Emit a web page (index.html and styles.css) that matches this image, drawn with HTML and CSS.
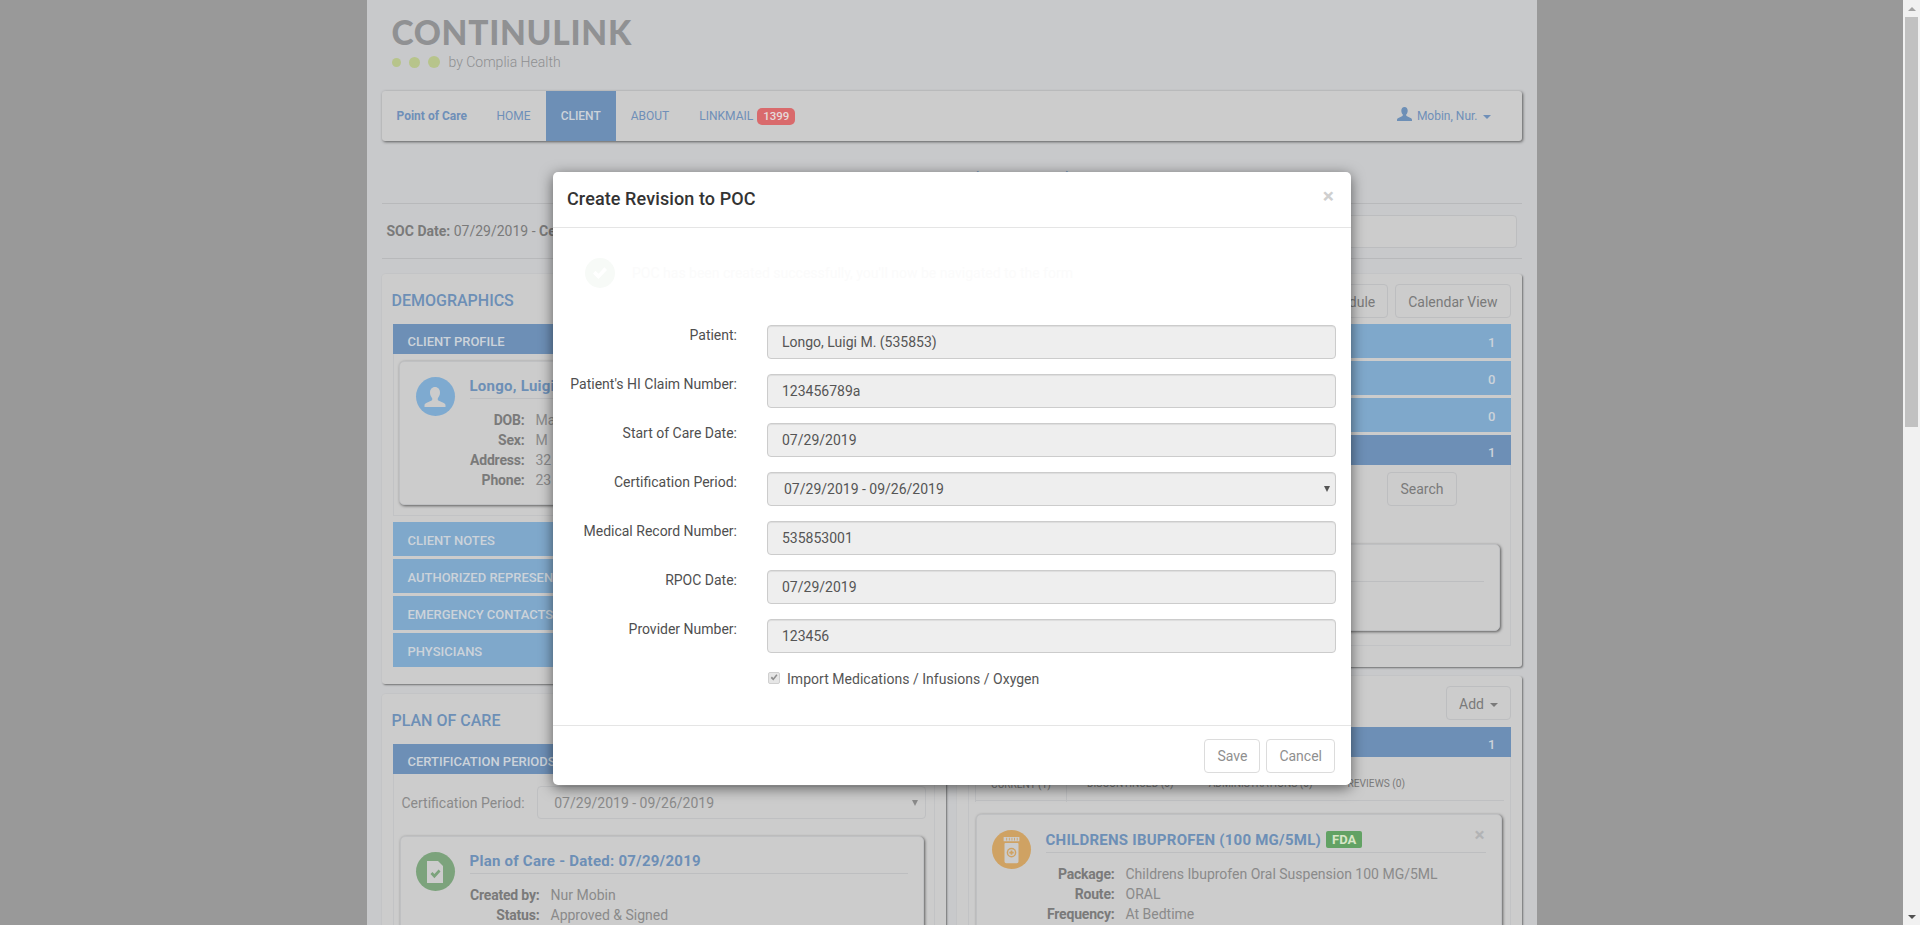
FILE: index.html
```html
<!DOCTYPE html>
<html lang="en">
<head>
    <meta charset="UTF-8">
    <meta name="viewport" content="width=device-width, initial-scale=1.0">
    <title>Create Revision to POC</title>
    <link rel="stylesheet" href="styles.css">
</head>
<body>
    <div class="viewport">
        <div class="container">
            <header class="logo">
                <div class="logo-name">CONTINULINK</div>
                <div class="logo-sub">
                    <span class="dot dot-sm"></span>
                    <span class="dot dot-md"></span>
                    <span class="dot dot-lg"></span>
                    <span class="logo-by">by Complia Health</span>
                </div>
            </header>

            <nav class="navbar">
                <a class="nav-brand">Point of Care</a>
                <a class="nav-link">HOME</a>
                <a class="nav-link active">CLIENT</a>
                <a class="nav-link">ABOUT</a>
                <a class="nav-link nav-mail">LINKMAIL <span class="badge">1399</span></a>
                <a class="nav-link nav-user">
                    <svg class="user-icon" viewBox="0 0 16 16"><path d="M8 0c2.100 0 3.400 1.600 3.400 3.900 0 1.600-.6 3-1.400 3.900-.3.4-.3 1.400.2 1.700l4.300 2.300c.9.5 1.500 1 1.500 2.200v1H0v-1c0-1.200.6-1.700 1.500-2.200l4.300-2.300c.5-.3.5-1.300.2-1.700-.8-.9-1.400-2.300-1.400-3.900C4.600 1.600 5.900 0 8 0z"/></svg>
                    Mobin, Nur. <span class="caret"></span>
                </a>
            </nav>

            <h2 class="client-title">Longo, Luigi M. (535853-0)</h2>

            <div class="soc-row">
                <div class="soc-text"><b>SOC Date:</b> 07/29/2019 - <b>Cert</b></div>
                <div class="soc-box"></div>
            </div>

            <div class="columns">
                <div class="column">
                    <section class="panel panel-demo">
                        <h3 class="panel-title">DEMOGRAPHICS</h3>
                        <div class="acc-head dark">CLIENT PROFILE</div>
                        <div class="acc-body">
                            <div class="card card-profile">
                                <div class="circle circle-blue">
                                    <svg viewBox="0 0 24 24" width="24" height="24"><path fill="#ccc" d="M12 2c3 0 5 2.300 5 5.600 0 2.300-.9 4.200-2 5.400-.4.600-.4 2 .3 2.400l5.500 2.600c1 .5 1.700 1.100 1.700 2.500V22H1.500v-1.500c0-1.400.7-2 1.700-2.500l5.500-2.600c.7-.4.7-1.800.3-2.400-1.100-1.200-2-3.100-2-5.400C7 4.300 9 2 12 2z"/></svg>
                                </div>
                                <div class="card-main">
                                    <div class="card-title">Longo, Luigi M.</div>
                                    <dl class="facts facts-profile">
                                        <dt>DOB:</dt><dd>Mar</dd>
                                        <dt>Sex:</dt><dd>M</dd>
                                        <dt>Address:</dt><dd>32</dd>
                                        <dt>Phone:</dt><dd>23</dd>
                                    </dl>
                                </div>
                            </div>
                        </div>
                        <div class="acc-head light">CLIENT NOTES</div>
                        <div class="acc-head light">AUTHORIZED REPRESENTATIVES</div>
                        <div class="acc-head light">EMERGENCY CONTACTS</div>
                        <div class="acc-head light">PHYSICIANS</div>
                    </section>

                    <section class="panel panel-poc">
                        <h3 class="panel-title">PLAN OF CARE</h3>
                        <div class="acc-head dark">CERTIFICATION PERIODS</div>
                        <div class="acc-body acc-body-open">
                            <div class="cert-row">
                                <span class="cert-label">Certification Period:</span>
                                <div class="cert-select">07/29/2019 - 09/26/2019<span class="arrow"></span></div>
                            </div>
                            <div class="card card-poc">
                                <div class="circle circle-green">
                                    <svg viewBox="0 0 24 24" width="24" height="28"><path fill="#ccc" d="M4 1h11l5 5v17H4z"/><path fill="#7ca37c" d="M7.500 14l1.900-2 2 2.100 4.200-4.600 1.900 2-6.100 6.700z"/></svg>
                                </div>
                                <div class="card-main">
                                    <div class="card-title">Plan of Care - Dated: 07/29/2019</div>
                                    <dl class="facts facts-poc">
                                        <dt>Created by:</dt><dd>Nur Mobin</dd>
                                        <dt>Status:</dt><dd>Approved &amp; Signed</dd>
                                    </dl>
                                </div>
                            </div>
                        </div>
                    </section>
                </div>

                <div class="column">
                    <section class="panel panel-visits">
                        <div class="panel-tools">
                            <button class="btn">Schedule</button>
                            <button class="btn">Calendar View</button>
                        </div>
                        <div class="acc-head light count-row"><span>1</span></div>
                        <div class="acc-head light count-row"><span>0</span></div>
                        <div class="acc-head light count-row"><span>0</span></div>
                        <div class="acc-head dark count-row"><span>1</span></div>
                        <div class="acc-body acc-body-visits">
                            <div class="search-row"><button class="btn">Search</button></div>
                            <div class="card card-visit"><div class="visit-line"></div></div>
                        </div>
                    </section>

                    <section class="panel panel-meds">
                        <div class="panel-tools tools-add">
                            <button class="btn">Add <span class="caret"></span></button>
                        </div>
                        <div class="acc-head dark count-row"><span>1</span></div>
                        <div class="acc-body acc-body-meds">
                            <div class="tabs">
                                <a class="tab active">CURRENT (1)</a>
                                <a class="tab">DISCONTINUED (0)</a>
                                <a class="tab">ADMINISTRATIONS (0)</a>
                                <a class="tab">REVIEWS (0)</a>
                            </div>
                            <div class="card card-med">
                                <div class="circle circle-orange">
                                    <svg viewBox="0 0 24 32" width="21" height="28"><path fill="#ccc" d="M3 1h18v5H3zM5 8h14a1 1 0 0 1 1 1v20a2 2 0 0 1-2 2H6a2 2 0 0 1-2-2V9a1 1 0 0 1 1-1z"/><path fill="#cfa263" d="M6 2h1v3H6zM9 2h1v3H9zM12 2h1v3h-1zM15 2h1v3h-1zM18 2h1v3h-1z"/><circle cx="12" cy="19" r="5.500" fill="#cfa263"/><circle cx="12" cy="19" r="3.800" fill="#ccc"/><path fill="#cfa263" d="M11 16.500h2V18h1.500v2H13v1.500h-2V20H9.500v-2H11z"/></svg>
                                </div>
                                <div class="card-main">
                                    <div class="card-title">CHILDRENS IBUPROFEN (100 MG/5ML) <span class="fda">FDA</span></div>
                                    <span class="card-close">&times;</span>
                                    <dl class="facts facts-med">
                                        <dt>Package:</dt><dd>Childrens Ibuprofen Oral Suspension 100 MG/5ML</dd>
                                        <dt>Route:</dt><dd>ORAL</dd>
                                        <dt>Frequency:</dt><dd>At Bedtime</dd>
                                    </dl>
                                </div>
                            </div>
                        </div>
                    </section>
                </div>
            </div>
        </div>

        <div class="modal">
            <div class="modal-header">
                <h4 class="modal-title">Create Revision to POC</h4>
                <span class="modal-close">&times;</span>
            </div>
            <div class="modal-body">
                <div class="alert-faded">
                    <span class="alert-icon">
                        <svg viewBox="0 0 16 16" width="16" height="16"><path fill="#fff" d="M1 8.500l2.500-2.700 3 3 6-6.500L15 5l-8.500 9z"/></svg>
                    </span>
                    POC has been created successfully, you'll now be navigated to the form
                </div>
                <form class="form">
                    <label class="form-label">Patient:</label>
                    <input class="form-input" type="text" value="Longo, Luigi M. (535853)" disabled>
                    <label class="form-label">Patient's HI Claim Number:</label>
                    <input class="form-input" type="text" value="123456789a" disabled>
                    <label class="form-label">Start of Care Date:</label>
                    <input class="form-input" type="text" value="07/29/2019" disabled>
                    <label class="form-label">Certification Period:</label>
                    <div class="select-wrap">
                        <select class="form-input form-select" disabled><option>07/29/2019 - 09/26/2019</option></select>
                    </div>
                    <label class="form-label">Medical Record Number:</label>
                    <input class="form-input" type="text" value="535853001" disabled>
                    <label class="form-label">RPOC Date:</label>
                    <input class="form-input" type="text" value="07/29/2019" disabled>
                    <label class="form-label">Provider Number:</label>
                    <input class="form-input" type="text" value="123456" disabled>
                    <div class="form-check">
                        <span class="check-box">
                            <svg viewBox="0 0 12 12" width="11" height="11"><path fill="#8f8f8f" d="M2 6.500l1.500-1.600 1.700 1.700L8.800 2l1.400 1.300-5 6.200z"/></svg>
                        </span>
                        Import Medications / Infusions / Oxygen
                    </div>
                </form>
            </div>
            <div class="modal-footer">
                <button class="btn btn-modal">Save</button>
                <button class="btn btn-modal">Cancel</button>
            </div>
        </div>
    </div>

    <div class="scrollbar">
        <div class="scroll-btn"><span class="scroll-up"></span></div>
        <div class="scroll-track"><div class="scroll-thumb"></div></div>
        <div class="scroll-btn"><span class="scroll-down"></span></div>
    </div>
</body>
</html>
```

FILE: styles.css
```css
html, body {
    height: 100%;
}

body {
    margin: 0;
    height: 925px;
    overflow: hidden;
    display: flex;
    background-color: #999;
    font-family: 'Roboto', sans-serif;
    font-size: 14px;
    color: #7a7a7a;
}

.viewport {
    flex: 1;
    position: relative;
    overflow: hidden;
}

.container {
    box-sizing: border-box;
    width: 1170px;
    height: 925px;
    margin: 0 auto;
    padding: 0 15px;
    background-color: #c8c9cb;
}

/* logo */
.logo {
    box-sizing: border-box;
    height: 91px;
    padding: 14px 0 0 10px;
}

.logo-name {
    font-family: 'Lato', sans-serif;
    font-weight: 900;
    font-size: 33.500px;
    line-height: 36px;
    letter-spacing: 0.7px;
    color: #909193;
}

.logo-sub {
    display: flex;
    align-items: center;
    height: 20px;
    margin-top: 2px;
}

.dot {
    border-radius: 50%;
    background-color: #b7c48b;
    margin-right: 8px;
}

.dot-sm { width: 9px; height: 9px; }
.dot-md { width: 11px; height: 11px; }
.dot-lg { width: 12px; height: 12px; }

.logo-by {
    margin-left: 1px;
    font-size: 14px;
    font-weight: 300;
    color: #8e8f91;
}

/* navbar */
.navbar {
    display: flex;
    height: 50px;
    box-sizing: border-box;
    background-color: #ccc;
    border-radius: 3px;
    box-shadow: 1px 1px 3px rgba(0, 0, 0, 0.55);
    font-size: 12px;
    line-height: 50px;
    white-space: nowrap;
    color: #6f8fb8;
}

.nav-brand {
    padding-left: 15px;
    width: 70px;
    margin-right: 15px;
    font-weight: 700;
}

.nav-link {
    padding: 0 15px;
}

.nav-link.active {
    background-color: #6d8fb6;
    color: #ccd3da;
    font-weight: 500;
}

.nav-mail {
    padding-right: 0;
}

.badge {
    display: inline-block;
    padding: 0 6px;
    margin-left: 1px;
    line-height: 17px;
    border-radius: 5px;
    background-color: #d96a6c;
    color: #e6dada;
    font-weight: 500;
    font-size: 11.500px;
    vertical-align: 0;
}

.nav-user {
    margin-left: auto;
    padding-right: 31px;
}

.user-icon {
    width: 15px;
    height: 15px;
    fill: #6d8fb6;
    vertical-align: -2px;
    margin-right: 2px;
}

.caret {
    display: inline-block;
    width: 0;
    height: 0;
    margin-left: 2px;
    vertical-align: middle;
    border-top: 4px solid;
    border-left: 4px solid transparent;
    border-right: 4px solid transparent;
}

/* client title */
.client-title {
    box-sizing: border-box;
    height: 63px;
    margin: 0;
    padding-top: 27px;
    border-bottom: 1px solid #b8b9bb;
    text-align: center;
    font-size: 20px;
    font-weight: 500;
    line-height: 24px;
    color: #6d8fb6;
}

.soc-row {
    display: flex;
    align-items: center;
    justify-content: space-between;
    box-sizing: border-box;
    height: 55px;
    padding: 0 5px;
    border-bottom: 1px solid #b8b9bb;
}

.soc-box {
    width: 500px;
    height: 33px;
    box-sizing: border-box;
    border: 1px solid #bcbdbf;
    border-radius: 4px;
    background-color: #ccc;
}

/* two columns */
.columns {
    display: grid;
    grid-template-columns: 564px 565px;
    gap: 11px;
    margin-top: 15px;
}

.column {
    display: flex;
    flex-direction: column;
}

.panel {
    box-sizing: border-box;
    padding: 0 11px;
    background-color: #ccc;
    border-radius: 3px;
    box-shadow: 1px 1px 2px rgba(0, 0, 0, 0.45);
}

.panel-demo {
    height: 410px;
    margin-bottom: 10px;
}

.panel-visits {
    height: 393px;
    margin-bottom: 9px;
}

.panel-poc,
.panel-meds {
    height: 400px;
}

.panel-title {
    margin: 0 0 0 -1px;
    height: 50px;
    font-size: 16px;
    font-weight: 500;
    line-height: 54px;
    color: #6d8fb6;
}

.panel-tools {
    display: flex;
    justify-content: flex-end;
    gap: 7px;
    height: 50px;
    padding-top: 10px;
    box-sizing: border-box;
}

.panel-tools .btn {
    padding-top: 1px;
}

.tools-add {
    height: 51px;
}

/* accordion heads */
.acc-head {
    box-sizing: border-box;
    padding: 0 15px;
    font-size: 13px;
    font-weight: 500;
    white-space: nowrap;
    overflow: hidden;
    color: #ccd3da;
}

.acc-head.dark {
    height: 30px;
    line-height: 35px;
    background-color: #6d8fb6;
}

.acc-head.light {
    height: 34px;
    line-height: 37px;
    margin-bottom: 3px;
    background-color: #7fa8cb;
}

.count-row {
    text-align: right;
    padding-right: 15px;
}

.acc-body {
    box-sizing: border-box;
    border: 1px solid #c2c3c5;
    border-top: none;
    padding: 7px 6px 11px 5px;
    margin-bottom: 6px;
    height: 162px;
}

.acc-body-open {
    padding: 12px 10px 0 6px;
    height: 200px;
}

.acc-body-visits {
    height: 181px;
    padding: 7px 10px 0;
    margin-bottom: 0;
}

.acc-body-meds {
    height: 300px;
    padding: 0 8px 0 7px;
}

/* cards */
.card {
    display: flex;
    box-sizing: border-box;
    background-color: #ccc;
    border: 1px solid #bfc0c2;
    border-radius: 5px;
    box-shadow: 1px 1px 3px rgba(0, 0, 0, 0.55);
}

.card-profile {
    height: 144px;
    padding: 14px 15px 0 16px;
}

.card-poc {
    margin-top: 17px;
    height: 200px;
    padding: 14px 15px 0 15px;
}

.card-med {
    margin-top: 13px;
    height: 200px;
    padding: 15px 15px 0 15px;
}

.card-profile .circle,
.card-poc .circle {
    margin-top: 1px;
}

.card-main {
    flex: 1;
    position: relative;
    margin-left: 15px;
}

.circle {
    flex: none;
    display: flex;
    align-items: center;
    justify-content: center;
    width: 39px;
    height: 39px;
    border-radius: 50%;
}

.circle-blue { background-color: #7eaad0; }
.circle-green { background-color: #7ca37c; }
.circle-orange { background-color: #cfa263; }

.card-title {
    height: 22px;
    border-bottom: 1px solid #bdbec0;
    font-size: 15px;
    font-weight: 700;
    letter-spacing: 0.25px;
    line-height: 20px;
    white-space: nowrap;
    color: #6d8fb6;
}

.fda {
    display: inline-block;
    padding: 0 6px;
    margin-left: 1px;
    line-height: 17px;
    letter-spacing: 0;
    border-radius: 2px;
    background-color: #62a264;
    color: #d8e6c8;
    font-size: 13px;
    vertical-align: 1px;
}

.card-close {
    position: absolute;
    right: 1px;
    top: -5px;
    font-size: 19px;
    line-height: 20px;
    color: #b2b3b5;
    font-weight: 700;
}

.facts {
    display: grid;
    margin: 11px 0 0;
    line-height: 20px;
    white-space: nowrap;
}

.facts dt {
    text-align: right;
    font-weight: 700;
    letter-spacing: -0.2px;
    color: #7a7a7a;
}

.facts dd {
    margin: 0;
    color: #8a8a8a;
}

.facts-profile { grid-template-columns: 55px auto; column-gap: 11px; }
.facts-poc { grid-template-columns: 72px auto; column-gap: 11px; margin-left: -2px; }
.facts-med { grid-template-columns: 69px auto; column-gap: 11px; }

/* cert select */
.cert-row {
    display: flex;
    align-items: center;
    gap: 11px;
    height: 33px;
    padding-left: 2px;
    margin-right: -2px;
    line-height: 36px;
}

.cert-label {
    color: #8a8a8a;
    width: 125px;
    white-space: nowrap;
}

.cert-select {
    position: relative;
    box-sizing: border-box;
    width: 389px;
    height: 33px;
    padding-left: 16px;
    border: 1px solid #bfc0c2;
    border-radius: 4px;
    line-height: 33px;
    color: #8a8a8a;
}

.arrow {
    position: absolute;
    right: 7px;
    top: 13px;
    width: 0;
    height: 0;
    border-top: 6px solid #8a8a8a;
    border-left: 3px solid transparent;
    border-right: 3px solid transparent;
}

/* visits */
.search-row {
    display: flex;
    justify-content: flex-end;
    padding-right: 43px;
}

.card-visit {
    margin-top: 38px;
    height: 87px;
    margin-left: 300px;
    padding: 36px 15px 0 0;
}

.visit-line {
    flex: 1;
    height: 1px;
    background-color: #bdbec0;
}

/* tabs */
.tabs {
    display: flex;
    gap: 4px;
    height: 44px;
    box-sizing: border-box;
    margin: 0 -2px 0 -1px;
    padding-top: 15px;
    border-bottom: 1px solid #bfc0c2;
    font-size: 10.200px;
    white-space: nowrap;
    color: #7a7a7a;
}

.tab {
    padding: 0 15.500px;
    line-height: 24px;
}

.tab.active {
    border: 1px solid #bfc0c2;
    border-bottom: none;
    height: 29px;
}

/* buttons */
.btn {
    box-sizing: border-box;
    height: 34px;
    padding: 0 12px;
    border: 1px solid #bdbec0;
    border-radius: 4px;
    background: transparent;
    font-family: inherit;
    font-size: 14px;
    color: #7a7a7a;
}

/* modal */
.modal {
    position: absolute;
    left: 553px;
    top: 172px;
    box-sizing: border-box;
    width: 798px;
    height: 613px;
    display: flex;
    flex-direction: column;
    background-color: #fff;
    border-radius: 5px;
    box-shadow: 0 3px 14px rgba(0, 0, 0, 0.55);
    color: #333;
}

.modal-header {
    display: flex;
    justify-content: space-between;
    box-sizing: border-box;
    height: 56px;
    padding: 15px 17px 0 14px;
    border-bottom: 1px solid #e5e5e5;
}

.modal-title {
    margin: 0;
    font-size: 18px;
    font-weight: 500;
    letter-spacing: 0.1px;
    line-height: 24px;
    color: #333;
}

.modal-close {
    font-size: 21px;
    font-weight: 700;
    line-height: 18px;
    color: #cfcfcf;
}

.modal-body {
    flex: 1;
    padding: 0 15px;
}

.alert-faded {
    display: flex;
    align-items: center;
    gap: 17px;
    height: 90px;
    margin-bottom: 7px;
    padding-left: 17px;
    color: #fbfbfb;
}

.alert-icon {
    display: flex;
    align-items: center;
    justify-content: center;
    width: 30px;
    height: 30px;
    border-radius: 50%;
    background-color: #f7faf7;
}

.form {
    display: grid;
    grid-template-columns: 169px 569px;
    column-gap: 30px;
    row-gap: 15px;
}

.form-label {
    text-align: right;
    line-height: 20px;
    white-space: nowrap;
    color: #4f4f4f;
}

.form-input {
    box-sizing: border-box;
    width: 100%;
    height: 34px;
    padding: 0 12px 0 14px;
    border: 1px solid #ccc;
    border-radius: 4px;
    background-color: #eee;
    box-shadow: inset 0 1px 1px rgba(0, 0, 0, 0.075);
    font-family: inherit;
    font-size: 14px;
    color: #555;
    -webkit-text-fill-color: #555;
    opacity: 1;
}

.select-wrap {
    position: relative;
}

.select-wrap::after {
    content: "";
    position: absolute;
    right: 6px;
    top: 14px;
    border-top: 6px solid #555;
    border-left: 3px solid transparent;
    border-right: 3px solid transparent;
}

.form-select {
    display: block;
    appearance: none;
    padding-left: 16px;
}

.form-check {
    grid-column: 2;
    display: flex;
    align-items: center;
    gap: 7px;
    height: 20px;
    margin-top: 1px;
    letter-spacing: 0.03px;
    color: #555;
}

.check-box {
    display: flex;
    align-items: center;
    justify-content: center;
    box-sizing: border-box;
    width: 12px;
    height: 12px;
    margin-left: 1px;
    margin-top: -3px;
    border: 1px solid #d0d0d0;
    border-radius: 2px;
    background-color: #e6e6e6;
}

.modal-footer {
    display: flex;
    justify-content: flex-end;
    gap: 6px;
    height: 60px;
    box-sizing: border-box;
    padding: 13px 16px 0 0;
    border-top: 1px solid #e5e5e5;
}

.btn-modal {
    border-color: #dcdcdc;
    color: #8f8f8f;
}

/* scrollbar */
.scrollbar {
    flex: none;
    display: flex;
    flex-direction: column;
    width: 17px;
    background-color: #f1f1f1;
}

.scroll-btn {
    display: flex;
    align-items: center;
    justify-content: center;
    height: 17px;
}

.scroll-up {
    border-bottom: 4px solid #a3a3a3;
    border-left: 4px solid transparent;
    border-right: 4px solid transparent;
}

.scroll-down {
    border-top: 4px solid #505050;
    border-left: 4px solid transparent;
    border-right: 4px solid transparent;
}

.scroll-track {
    flex: 1;
    padding: 0 2px;
}

.scroll-thumb {
    height: 410px;
    background-color: #c1c1c1;
}
```
